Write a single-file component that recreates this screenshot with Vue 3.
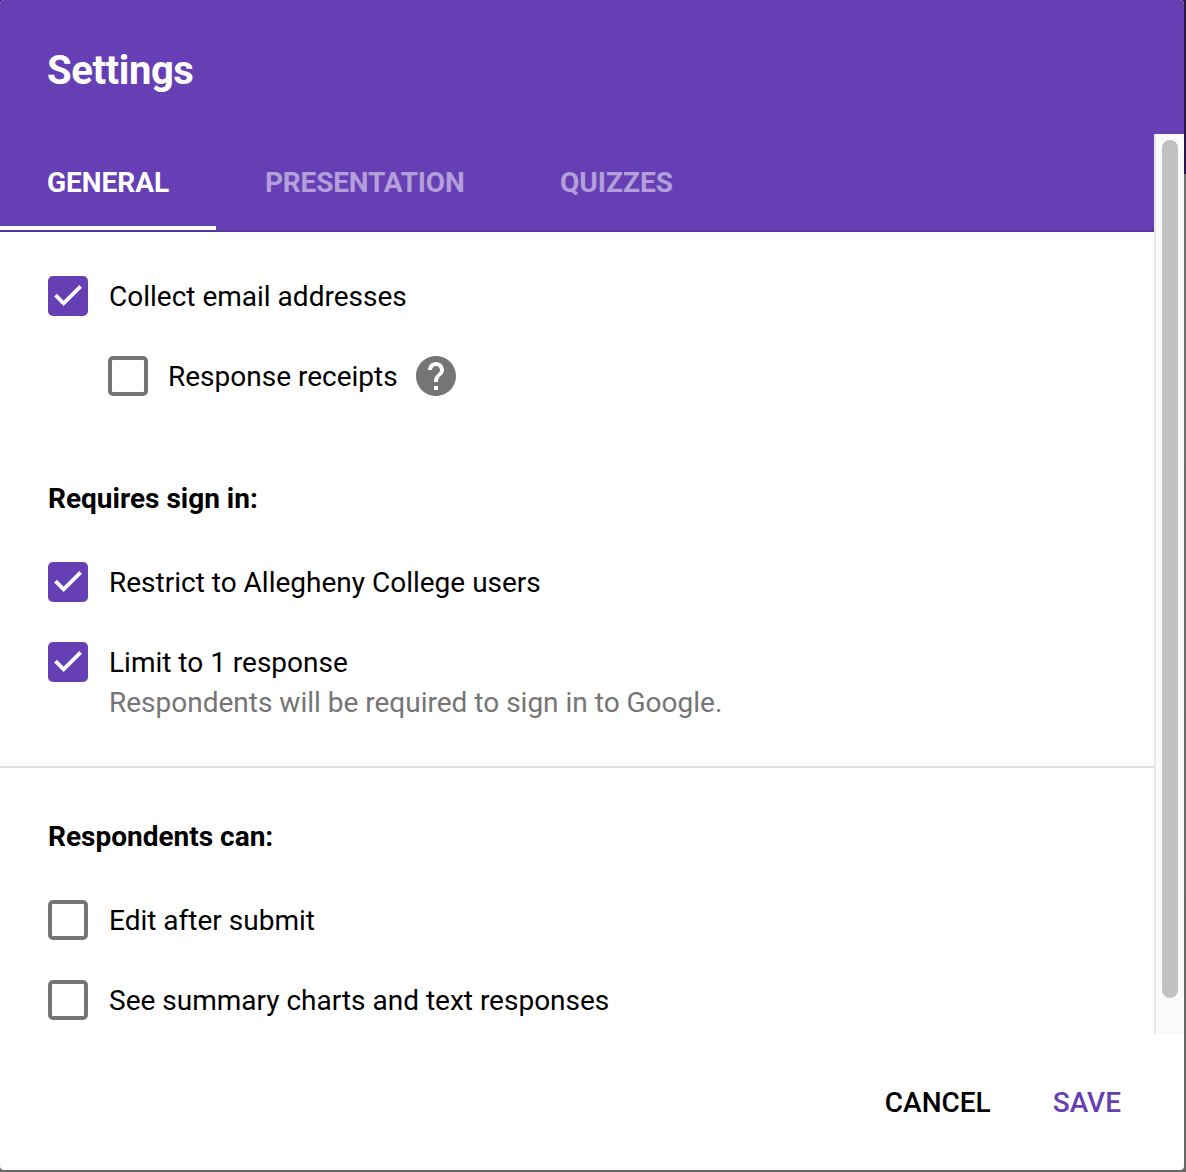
<script setup>
import { ref } from 'vue'

const tabs = [
  { id: 'general', label: 'GENERAL' },
  { id: 'presentation', label: 'PRESENTATION' },
  { id: 'quizzes', label: 'QUIZZES' },
]
const active = ref('general')

const sections = ref([
  {
    id: 'collect',
    options: [
      { id: 'email', label: 'Collect email addresses', checked: true },
      { id: 'receipts', label: 'Response receipts', checked: false, nested: true, help: true },
    ],
  },
  {
    id: 'signin',
    title: 'Requires sign in:',
    options: [
      { id: 'restrict', label: 'Restrict to Allegheny College users', checked: true },
      { id: 'limit', label: 'Limit to 1 response', checked: true, hint: 'Respondents will be required to sign in to Google.' },
    ],
  },
  {
    id: 'respondents',
    title: 'Respondents can:',
    options: [
      { id: 'edit', label: 'Edit after submit', checked: false },
      { id: 'summary', label: 'See summary charts and text responses', checked: false },
    ],
  },
])
</script>

<template>
  <div class="backdrop">
    <div class="dialog" role="dialog">
      <header class="head"><h1 class="title">Settings</h1></header>
      <div class="body">
        <div class="content">
          <nav class="tabs">
            <button
              v-for="t in tabs"
              :key="t.id"
              :class="['tab', t.id, { active: active === t.id }]"
              @click="active = t.id"
            ><span>{{ t.label }}</span></button>
          </nav>
          <section v-for="s in sections" :key="s.id" :class="['section', s.id]">
            <h2 v-if="s.title" class="heading"><span>{{ s.title }}</span></h2>
            <div v-for="o in s.options" :key="o.id" :class="['option', { nested: o.nested }]">
              <button :class="['box', { checked: o.checked }]" role="checkbox" :aria-checked="o.checked" @click="o.checked = !o.checked">
                <svg v-if="o.checked" width="40" height="40" viewBox="0 0 40 40">
                  <path d="M7.5 19.2 L15.6 27.3 L32.6 10.3" fill="none" stroke="#fff" stroke-width="3.8" />
                </svg>
              </button>
              <div class="text">
                <span :class="['label', o.id]">{{ o.label }}</span>
                <span v-if="o.hint" class="hint">{{ o.hint }}</span>
              </div>
              <svg v-if="o.help" class="help" width="40" height="40" viewBox="2 2 20 20">
                <path fill="#757575" d="M12 2C6.48 2 2 6.48 2 12s4.48 10 10 10 10-4.48 10-10S17.52 2 12 2zm1 17h-2v-2h2v2zm2.07-7.75l-.9.92C13.45 12.9 13 13.5 13 15h-2v-.5c0-1.1.45-2.1 1.17-2.83l1.24-1.26c.37-.36.59-.86.59-1.41 0-1.1-.9-2-2-2s-2 .9-2 2H8c0-2.21 1.79-4 4-4s4 1.79 4 4c0 .88-.36 1.68-.93 2.25z" />
              </svg>
            </div>
          </section>
        </div>
        <div class="scrollbar"><div class="thumb"></div></div>
      </div>
      <footer class="foot">
        <button class="action cancel">CANCEL</button>
        <button class="action save">SAVE</button>
      </footer>
    </div>
  </div>
</template>

<style>
body { margin: 0; overflow: hidden; }
</style>

<style scoped>
* { box-sizing: border-box; }
button { border: 0; padding: 0; margin: 0; background: none; font: inherit; color: inherit; }
.backdrop {
  width: 1186px;
  height: 1172px;
  background: linear-gradient(#27174c 174px, #707070 174px, #666 100%);
  font-family: Roboto, sans-serif;
  font-size: 28px;
  line-height: 40px;
  color: #000;
}
.dialog {
  width: 1184px;
  height: 1170px;
  display: flex;
  flex-direction: column;
  background: #fff;
  border-radius: 4px;
  overflow: hidden;
}
.head { height: 134px; flex: none; background: #673fb4; padding: 47px 47px 0; }
.title { margin: 0; font-size: 40px; line-height: 48px; font-weight: 700; letter-spacing: -0.4px; color: #fff; }
.body { height: 900px; flex: none; display: flex; }
.content { width: 1154px; overflow: hidden; }
.tabs { display: flex; height: 98px; background: #673fb4; border-bottom: 2px solid #5a359e; }
.tab {
  display: flex;
  height: 96px;
  align-items: center;
  padding: 6px 48px 0 47px;
  font-weight: 700;
  color: #b39fda;
  border-bottom: 4px solid transparent;
  white-space: nowrap;
}
.tab.active { color: #fff; border-bottom-color: #fff; }
.tab.general { width: 216px; }
.tab.presentation { width: 297px; padding-left: 49px; letter-spacing: -0.18px; }
.section { padding-left: 48px; }
.collect { padding-top: 44px; height: 226px; }
.signin { height: 310px; border-bottom: 2px solid #e0e0e0; padding-top: 21px; }
.respondents { padding-top: 49px; }
.heading { margin: 0 0 43px; font-size: 28px; line-height: 40px; font-weight: 700; }
.option { display: flex; align-items: flex-start; height: 40px; margin-bottom: 40px; white-space: nowrap; }
.nested { padding-left: 60px; }
.box { width: 40px; height: 40px; flex: none; border: 4px solid #757575; border-radius: 5px; }
.box.checked { border: 0; background: #673fb4; }
.box svg { display: block; }
.text { display: flex; flex-direction: column; margin: 1px 0 0 21px; }
.nested .text { margin-left: 20px; }
.hint { color: #757575; }
.help { margin-left: 18px; }
.scrollbar { width: 30px; padding: 6px 6px 0; background: #fafafa; border-left: 2px solid #e8e8e8; }
.thumb { width: 16px; height: 858px; border-radius: 8px; background: #c1c1c1; }
.foot { display: flex; justify-content: flex-end; gap: 62px; padding: 49px 63px 0 0; font-weight: 500; }
.save { color: #673fb4; }
</style>
